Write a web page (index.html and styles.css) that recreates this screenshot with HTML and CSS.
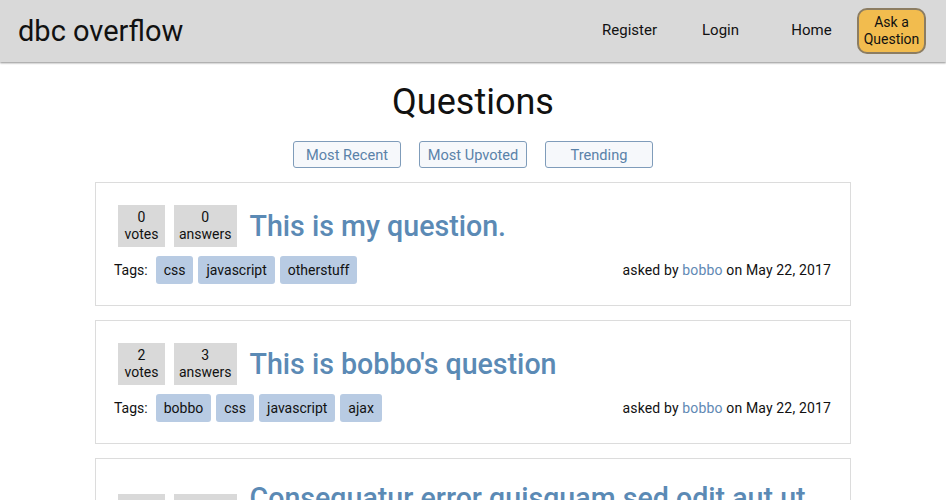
FILE: index.html
```html
<!DOCTYPE html>
<html>
<head>
<meta charset="utf-8">
<link rel="stylesheet" href="styles.css">
</head>
<body>
<header class="topbar">
  <div class="brand">dbc overflow</div>
  <nav class="nav">
    <a class="nav-link" href="#">Register</a>
    <a class="nav-link" href="#">Login</a>
    <a class="nav-link" href="#">Home</a>
    <a class="ask-btn" href="#">Ask a<br>Question</a>
  </nav>
</header>
<main class="main">
  <h1 class="page-title">Questions</h1>
  <div class="sorts">
    <button class="sort-btn">Most Recent</button>
    <button class="sort-btn">Most Upvoted</button>
    <button class="sort-btn">Trending</button>
  </div>
  <section class="card">
    <div class="card-top">
      <div class="stat"><span>0</span><span>votes</span></div>
      <div class="stat"><span>0</span><span>answers</span></div>
      <a class="q-title" href="#">This is my question.</a>
    </div>
    <div class="card-bottom">
      <div class="tags">
        <span class="tags-label">Tags:</span>
        <span class="tag">css</span>
        <span class="tag">javascript</span>
        <span class="tag">otherstuff</span>
      </div>
      <div class="asked">asked by <a class="author" href="#">bobbo</a> on May 22, 2017</div>
    </div>
  </section>
  <section class="card">
    <div class="card-top">
      <div class="stat"><span>2</span><span>votes</span></div>
      <div class="stat"><span>3</span><span>answers</span></div>
      <a class="q-title" href="#">This is bobbo's question</a>
    </div>
    <div class="card-bottom">
      <div class="tags">
        <span class="tags-label">Tags:</span>
        <span class="tag">bobbo</span>
        <span class="tag">css</span>
        <span class="tag">javascript</span>
        <span class="tag">ajax</span>
      </div>
      <div class="asked">asked by <a class="author" href="#">bobbo</a> on May 22, 2017</div>
    </div>
  </section>
  <section class="card">
    <div class="card-top">
      <div class="stat"><span>1</span><span>votes</span></div>
      <div class="stat"><span>0</span><span>answers</span></div>
      <a class="q-title" href="#">Consequatur error quisquam sed odit aut ut voluptatem</a>
    </div>
    <div class="card-bottom">
      <div class="tags">
        <span class="tags-label">Tags:</span>
        <span class="tag">css</span>
      </div>
      <div class="asked">asked by <a class="author" href="#">bobbo</a> on May 22, 2017</div>
    </div>
  </section>
</main>
</body>
</html>
```
FILE: styles.css
```css
* { box-sizing: border-box; }
html, body { margin: 0; padding: 0; }
body {
  font-family: Roboto, "Liberation Sans", sans-serif;
  color: #111;
  background: #fff;
  font-size: 14px;
}
a { text-decoration: none; }

.topbar {
  height: 62px;
  background: #d9d9d9;
  display: flex;
  align-items: center;
  justify-content: space-between;
  padding: 0 20px 0 18px;
  box-shadow: 0 1px 2px rgba(0,0,0,0.45);
  position: relative;
  z-index: 1;
}
.brand {
  font-size: 29px;
  color: #111;
}
.nav {
  display: flex;
  align-items: center;
}
.nav-link {
  width: 91px;
  text-align: center;
  color: #111;
  font-size: 15px;
  margin-top: -2px;
}
.ask-btn {
  width: 69px;
  height: 46px;
  background: #f2bc4e;
  border: 2px solid #8c7d62;
  border-radius: 10px;
  color: #111;
  font-size: 14px;
  line-height: 17px;
  text-align: center;
  display: flex;
  align-items: center;
  justify-content: center;
  margin-top: -1px;
}

.main {
  width: 756px;
  margin: 0 auto;
  padding-top: 18px;
}
.page-title {
  margin: 0;
  text-align: center;
  font-size: 36px;
  font-weight: 400;
  line-height: 44px;
  color: #111;
}
.sort-btn {
  width: 108px;
  height: 27px;
  font-family: Roboto, "Liberation Sans", sans-serif;
  font-size: 14.6px;
  color: #5a82a9;
  background: #f6f8fb;
  border: 1px solid #7f9cba;
  border-radius: 3px;
  padding: 0;
}
.sorts {
  display: flex;
  justify-content: center;
  gap: 18px;
  margin-top: 17px;
  margin-bottom: 14px;
}
.card {
  border: 1px solid #dcdcdc;
  padding: 22px 19px 21px 18px;
  margin-bottom: 14px;
}
.card-top {
  display: flex;
  align-items: center;
  gap: 9px;
  padding-left: 4px;
}
.stat {
  background: #d9d9d9;
  height: 42px;
  padding: 0 5px;
  min-width: 47px;
  flex: none;
  display: flex;
  flex-direction: column;
  align-items: center;
  justify-content: center;
  font-size: 14px;
  line-height: 17px;
  color: #111;
}
.q-title {
  margin-left: 4px;
  font-size: 28.6px;
  line-height: 34px;
  font-weight: 500;
  color: #5b8ab5;
}
.card-bottom {
  display: flex;
  justify-content: space-between;
  align-items: center;
  margin-top: 9px;
}
.tags {
  display: flex;
  align-items: center;
  gap: 5px;
}
.tags-label {
  margin-right: 3px;
  font-size: 14px;
}
.tag {
  background: #b8cbe3;
  border-radius: 3px;
  height: 28px;
  line-height: 28px;
  padding: 0 8px;
  font-size: 14px;
  color: #111;
}
.asked {
  font-size: 14px;
  letter-spacing: 0.15px;
  color: #111;
}
.author { color: #6189b4; }
```
